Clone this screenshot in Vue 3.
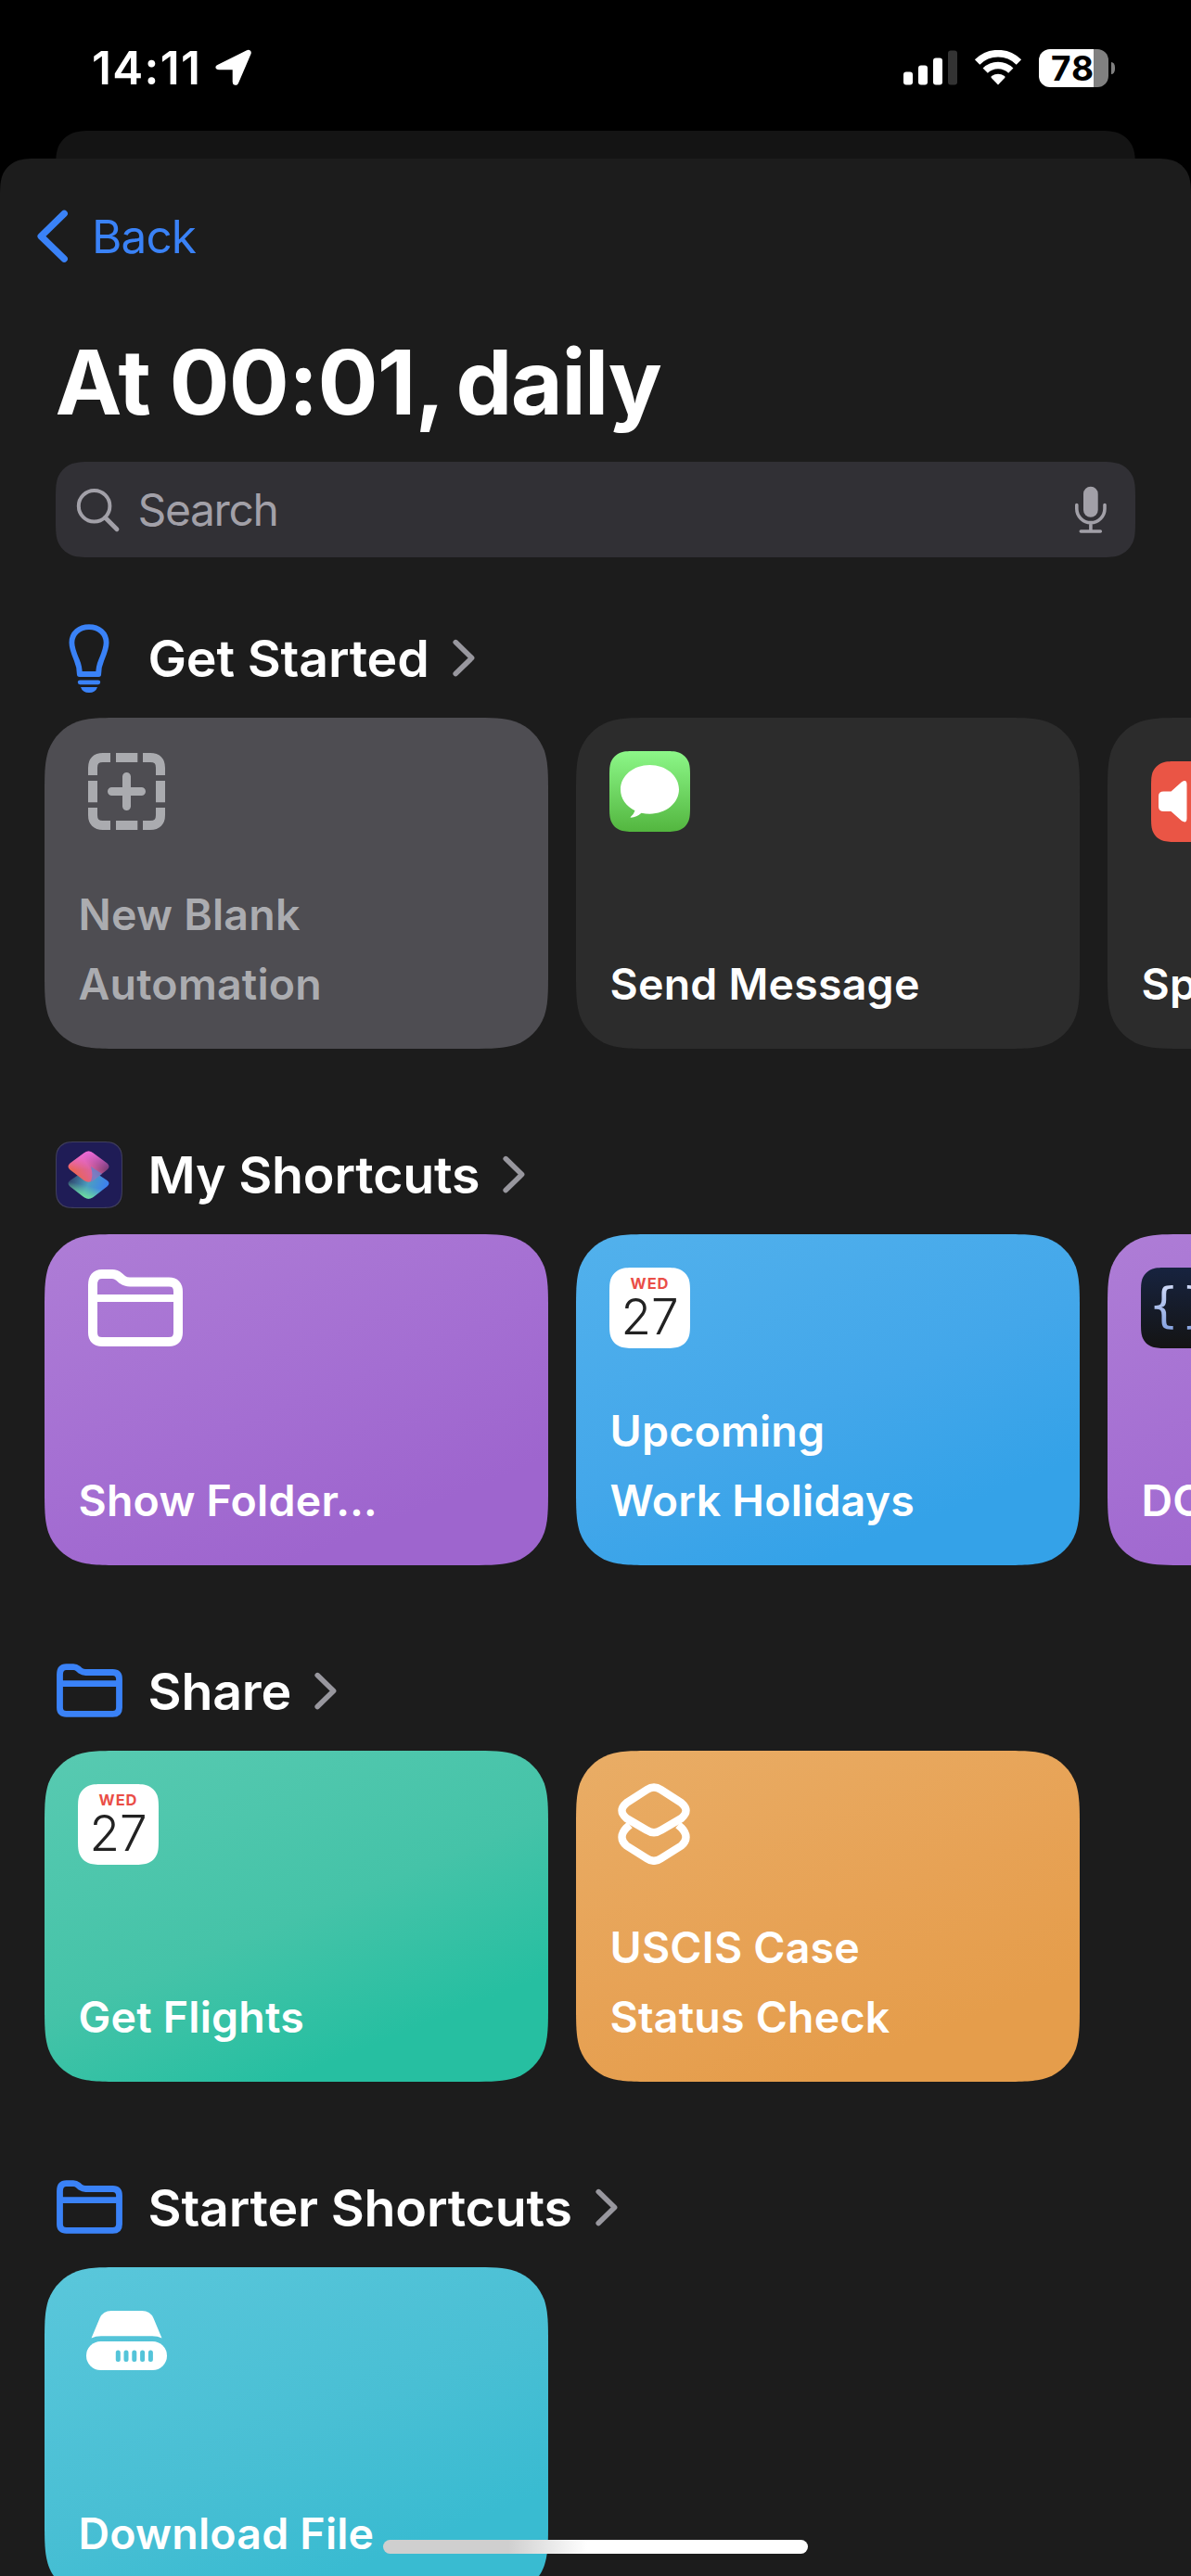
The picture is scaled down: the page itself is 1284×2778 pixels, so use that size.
<script setup>
// Continuous-corner rounded rectangle, returned as a CSS path().
function squircle(w, h, r, roundBottom = true) {
  const corner = [
    [1.52866498, 0, 1.08849296, 0, 0.86840694, 0, 0.63149379, 0.07491139],
    [0.37282383, 0.16905956, 0.16905956, 0.37282383, 0.07491139, 0.63149379],
    [0, 0.86840694, 0, 1.08849296, 0, 1.52866498],
  ]
  const flat = corner.flat().map((v) => v * r)
  const pts = []
  for (let i = 0; i < flat.length; i += 2) pts.push([flat[i], flat[i + 1]])
  const back = [...pts].reverse()
  const draw = (list, fn) => {
    const p = list.map(([x, y]) => fn(x, y).map((n) => n.toFixed(2)).join(' '))
    return `L${p[0]} C${p[1]} ${p[2]} ${p[3]} C${p[4]} ${p[5]} ${p[6]} C${p[7]} ${p[8]} ${p[9]}`
  }
  const top = `M${w / 2} 0 ${draw(pts, (x, y) => [w - x, y])}`
  const bottom = roundBottom
    ? `${draw(back, (x, y) => [w - x, h - y])} ${draw(pts, (x, y) => [x, h - y])}`
    : `L${w} ${h} L0 ${h}`
  return `path("${top} ${bottom} ${draw(back, (x, y) => [x, y])} Z")`
}

const cardClip = squircle(543, 357, 56)
const iconClip = squircle(87, 87, 19.5)
const appClip = squircle(72, 72, 16)
const appInnerClip = squircle(70, 70, 15.5)
const searchClip = squircle(1164, 103, 28)
const sheetClip = squircle(1284, 2607, 30, false)
const backClip = squircle(1164, 70, 30, false)

const sections = [
  {
    title: 'Get Started',
    icon: 'bulb',
    cards: [
      { icon: 'blank', tone: 'gray', lines: ['New Blank', 'Automation'] },
      { icon: 'message', tone: 'dark', lines: ['Send Message'] },
      { icon: 'speaker', tone: 'dark', lines: ['Sp'] },
    ],
  },
  {
    title: 'My Shortcuts',
    icon: 'app',
    cards: [
      { icon: 'folder', tone: 'purple', lines: ['Show Folder…'] },
      { icon: 'calendar', tone: 'blue', lines: ['Upcoming', 'Work Holidays'] },
      { icon: 'code', tone: 'purple', lines: ['DO'] },
    ],
  },
  {
    title: 'Share',
    icon: 'folder',
    cards: [
      { icon: 'calendar', tone: 'green', lines: ['Get Flights'] },
      { icon: 'layers', tone: 'orange', lines: ['USCIS Case', 'Status Check'] },
    ],
  },
  {
    title: 'Starter Shortcuts',
    icon: 'folder',
    cards: [{ icon: 'drive', tone: 'cyan', lines: ['Download File'] }],
  },
]
</script>

<template>
  <div class="screen">
    <header class="status">
      <div class="status-left">
        <span class="time">14:11</span>
        <svg class="location" width="40" height="40" viewBox="0 0 40 40">
          <path d="M3 18.2 34.6 2.4 C36.4 1.5 38 2.9 37.3 4.8 L23.7 36.4 C22.8 38.2 20 37.8 20 35.6 L20 20.9 L4 20.9 C1.6 20.9 0.9 19.2 3 18.2Z" fill="#fff" stroke="#fff" stroke-width="2.6" stroke-linejoin="round" />
        </svg>
      </div>
      <div class="status-right">
        <svg width="58" height="38" viewBox="0 0 58 38">
          <rect x="0" y="23.5" width="10" height="14" rx="3" fill="#fff" />
          <rect x="16" y="16.5" width="10" height="21" rx="3" fill="#fff" />
          <rect x="32" y="8.5" width="10" height="29" rx="3" fill="#fff" />
          <rect x="48" y="0.5" width="10" height="37" rx="3" fill="#333" />
        </svg>
        <svg class="wifi" width="52" height="38" viewBox="0 0 52 38">
          <path d="M3.6 13 A31.5 31.5 0 0 1 48.4 13" fill="none" stroke="#fff" stroke-width="7.6" />
          <path d="M12.2 22.2 A19.5 19.5 0 0 1 39.8 22.2" fill="none" stroke="#fff" stroke-width="7.4" />
          <path d="M26 37.4 L18.8 30.1 Q17.8 29 19 28.1 Q26 23.3 33 28.1 Q34.2 29 33.2 30.1 Z" fill="#fff" />
        </svg>
        <div class="battery"><span>78</span></div>
        <div class="nub"></div>
      </div>
    </header>

    <div class="back-sheet"></div>

    <main class="sheet">
      <nav class="nav">
        <svg width="34" height="58" viewBox="0 0 34 58">
          <path d="M29.2 4.4 4.2 28.8 29.2 53.2" fill="none" stroke="#3a82f7" stroke-width="7.4" stroke-linecap="round" stroke-linejoin="round" />
        </svg>
        <span>Back</span>
      </nav>

      <h1>At <span class="clock">00:01,</span> daily</h1>

      <div class="search">
        <svg width="48" height="50" viewBox="0 0 48 50">
          <circle cx="19.6" cy="20.7" r="16.8" fill="none" stroke="#a2a0a8" stroke-width="4" />
          <path d="M31.5 33.2 44 45.7" stroke="#a2a0a8" stroke-width="4.8" stroke-linecap="round" />
        </svg>
        <span>Search</span>
        <svg class="mic" width="34" height="52" viewBox="0 0 34 52">
          <rect x="9" y="0.8" width="15.7" height="33" rx="7.85" fill="#a2a0a8" />
          <path d="M1.8 20.5 V24.5 A15.1 15.1 0 0 0 32 24.5 V20.5 M16.9 40 V48" fill="none" stroke="#a2a0a8" stroke-width="3.6" stroke-linecap="round" />
          <path d="M6.3 49 H27.3" stroke="#a2a0a8" stroke-width="3.6" stroke-linecap="round" />
        </svg>
      </div>

      <section v-for="section in sections" :key="section.title">
        <div class="heading">
          <div class="heading-icon">
            <svg v-if="section.icon === 'bulb'" width="44" height="74" viewBox="0 0 44 74">
              <path d="M11.8 54 C11.8 54 12 46.5 8.6 38.5 C5.6 31.5 3.4 26.5 3.4 20 C3.4 9.8 11.6 3.1 22 3.1 S40.6 9.8 40.6 20 C40.6 26.5 38.4 31.5 35.4 38.5 C32 46.5 32.2 54 32.2 54 Z" fill="none" stroke="#3a82f7" stroke-width="5.8" stroke-linejoin="round" />
              <rect x="9.8" y="60.4" width="24.4" height="4.8" rx="2.4" fill="#3a82f7" />
              <path d="M13 68 H31 Q29 74 22 74 T13 68Z" fill="#3a82f7" />
            </svg>
            <div v-else-if="section.icon === 'app'" class="app">
              <div class="app-inner">
                <svg width="70" height="70" viewBox="0 0 70 70">
                  <defs>
                    <linearGradient id="topA" x1="0" y1="0.75" x2="1" y2="0.25">
                      <stop offset="0" stop-color="#f0653f" />
                      <stop offset="0.5" stop-color="#dc629c" />
                      <stop offset="1" stop-color="#4b2a66" />
                    </linearGradient>
                    <linearGradient id="topB" x1="0.5" y1="0" x2="0.5" y2="1">
                      <stop offset="0" stop-color="#ee6bdc" />
                      <stop offset="0.6" stop-color="#ee6bdc" stop-opacity="0" />
                    </linearGradient>
                    <linearGradient id="lowA" x1="0" y1="0.3" x2="1" y2="0.6">
                      <stop offset="0" stop-color="#2c3c66" />
                      <stop offset="0.5" stop-color="#4c9fc0" />
                      <stop offset="1" stop-color="#3a7cf6" />
                    </linearGradient>
                    <linearGradient id="lowB" x1="0.6" y1="0.4" x2="0.4" y2="1">
                      <stop offset="0.3" stop-color="#6fe39a" stop-opacity="0" />
                      <stop offset="1" stop-color="#72e59a" />
                    </linearGradient>
                  </defs>
                  <path d="M34.5 29 Q37 29 39.5 31 L54.5 41 Q58.5 44 54.5 47.4 L39.5 59 Q34.5 62.6 29.5 59 L14.5 47.4 Q10.5 44 14.5 41 L29.5 31 Q32 29 34.5 29Z" fill="url(#lowA)" />
                  <path d="M34.5 29 Q37 29 39.5 31 L54.5 41 Q58.5 44 54.5 47.4 L39.5 59 Q34.5 62.6 29.5 59 L14.5 47.4 Q10.5 44 14.5 41 L29.5 31 Q32 29 34.5 29Z" fill="url(#lowB)" />
                  <path d="M39.5 11.4 L54.5 22.6 Q58.5 26 54.5 29.4 L39.5 41 Q34.5 44.6 29.5 41 L14.5 29.4 Q10.5 26 14.5 22.6 L29.5 11.4 Q34.5 7.6 39.5 11.4Z" fill="url(#topA)" />
                  <path d="M39.5 11.4 L54.5 22.6 Q58.5 26 54.5 29.4 L39.5 41 Q34.5 44.6 29.5 41 L14.5 29.4 Q10.5 26 14.5 22.6 L29.5 11.4 Q34.5 7.6 39.5 11.4Z" fill="url(#topB)" />
                  <path d="M37 26 L49 34 L39.5 41 L36.5 42.6 Q40 36 37 26Z" fill="#5d86cf" opacity="0.75" />
                </svg>
              </div>
            </div>
            <svg v-else class="heading-folder" width="71" height="58" viewBox="0 0 102 83">
              <path d="M5 17 Q5 5 15 5 H26 Q30 5 33.5 8 L37 11 Q40.5 13.5 45 13.5 H87 Q97 13.5 97 24 V68 Q97 78 87 78 H15 Q5 78 5 68 Z M5 31 H97" fill="none" stroke="#3a82f7" stroke-width="9.8" />
            </svg>
          </div>
          <h2>{{ section.title }}</h2>
          <svg class="chevron" width="24" height="42" viewBox="0 0 24 42">
            <path d="M3.2 3.6 20.6 20.6 3.2 37.6" fill="none" stroke="#98979e" stroke-width="5.6" stroke-linecap="round" stroke-linejoin="round" />
          </svg>
        </div>

        <div class="cards">
          <article v-for="card in section.cards" :key="card.lines[0]" class="card" :class="card.tone">
            <svg v-if="card.icon === 'blank'" class="glyph" width="83" height="83" viewBox="0 0 83 83">
              <path d="M24 5 H16 Q5 5 5 16 V24 M59 5 H67 Q78 5 78 16 V24 M78 59 V67 Q78 78 67 78 H59 M24 78 H16 Q5 78 5 67 V59 M30 5 H53.3 M30 78 H53.3 M5 30 V53.3 M78 30 V53.3" fill="none" stroke="#aaabaf" stroke-width="10" />
              <path d="M25.5 41.5 H57.5 M41.5 25.5 V57.5" stroke="#aaabaf" stroke-width="9" stroke-linecap="round" />
            </svg>
            <svg v-else-if="card.icon === 'folder'" class="glyph" width="102" height="83" viewBox="0 0 102 83">
              <path d="M5 17 Q5 5 15 5 H26 Q30 5 33.5 8 L37 11 Q40.5 13.5 45 13.5 H87 Q97 13.5 97 24 V68 Q97 78 87 78 H15 Q5 78 5 68 Z" fill="none" stroke="#fff" stroke-width="10" />
              <path d="M5 31 H97" stroke="#fff" stroke-width="8" />
            </svg>
            <svg v-else-if="card.icon === 'layers'" class="glyph layers" width="78" height="88" viewBox="0 0 78 88">
              <path d="M13 45 L9.5 48 Q-0.5 58.5 9.5 67.5 L31 81 Q39 86.5 47 81 L68.5 67.5 Q78.5 58.5 68.5 48 L65 45" fill="none" stroke="#fff" stroke-width="8.4" />
              <path d="M31.5 7 Q39 2 46.5 7 L68.5 21.2 Q78.5 29.6 68.5 38 L46.5 50.8 Q39 55.8 31.5 50.8 L9.5 38 Q-0.5 29.6 9.5 21.2 Z" fill="none" stroke="#fff" stroke-width="8.4" />
            </svg>
            <svg v-else-if="card.icon === 'drive'" class="glyph drive" width="87" height="64" viewBox="0 0 87 64">
              <path d="M5.5 29.6 L14.5 8 Q18 0 27 0 H60 Q69 0 72.5 8 L81.5 29.6 Q77 27.2 71 27.2 H16 Q10 27.2 5.5 29.6Z" fill="#fff" />
              <rect y="33" width="87" height="31" rx="15.5" fill="#fff" />
              <path d="M34.3 45 V52.6 M43 45 V52.6 M51.8 45 V52.6 M60.6 45 V52.6 M69.4 45 V52.6" stroke="#54c4d9" stroke-width="5" stroke-linecap="round" />
            </svg>
            <div v-else-if="card.icon === 'calendar'" class="tile calendar">
              <span class="weekday">WED</span>
              <span class="day">27</span>
            </div>
            <div v-else-if="card.icon === 'message'" class="tile message">
              <svg width="87" height="87" viewBox="0 0 87 87">
                <path d="M43.5 15 C61 15 75 26.5 75 41.3 C75 56 61 67.7 43.5 67.7 Q39 67.7 34.5 66.8 Q29.5 71.3 23 71.8 Q22.2 71.5 23 70.8 Q26.5 67.5 27.5 64.2 C18 59.8 12 51.3 12 41.3 C12 26.5 26 15 43.5 15Z" fill="#fff" />
              </svg>
            </div>
            <div v-else-if="card.icon === 'speaker'" class="tile speaker">
              <svg width="87" height="87" viewBox="0 0 87 87">
                <path d="M13.5 32.5 H21.5 L33 22.2 Q38.5 18.8 38.5 25 V61.5 Q38.5 67.5 33 64.3 L21.5 54 H13.5 Q8 54 8 49 V37.5 Q8 32.5 13.5 32.5Z" fill="#fff" />
              </svg>
            </div>
            <div v-else class="tile code"><span>{}</span></div>
            <p><span v-for="line in card.lines" :key="line">{{ line }}</span></p>
          </article>
        </div>
      </section>
    </main>

    <div class="home-indicator"></div>
  </div>
</template>

<style>
html,
body {
  background: #000;
  overflow: hidden;
}
</style>

<style scoped>
.screen {
  position: relative;
  width: 1284px;
  height: 2778px;
  overflow: hidden;
  background: #000;
  color: #fff;
  font-family: Inter, "Liberation Sans", sans-serif;
}

.status {
  display: flex;
  justify-content: space-between;
  height: 141px;
  padding: 0 82px 0 99px;
  box-sizing: border-box;
}
.status-left,
.status-right {
  display: flex;
  align-items: center;
  height: 60px;
  margin-top: 43px;
}
.time {
  font-size: 49.5px;
  line-height: 60px;
  font-weight: 600;
  letter-spacing: 1.35px;
}
.location {
  margin-left: 15px;
}
.wifi {
  margin-left: 18.5px;
}
.battery {
  width: 75px;
  height: 41px;
  margin-left: 18px;
  border-radius: 12px;
  background: linear-gradient(90deg, #fff 59px, #808080 59px);
  color: #000;
  font-size: 37px;
  line-height: 41px;
  font-weight: 700;
  letter-spacing: 1px;
}
.battery span {
  display: block;
  padding-left: 13px;
}
.nub {
  width: 4px;
  height: 13px;
  margin-left: 3px;
  border-radius: 0 5px 5px 0 / 0 6.5px 6.5px 0;
  background: #808080;
}

.back-sheet {
  height: 30px;
  margin: 0 60px;
  background: #141414;
  clip-path: v-bind(backClip);
}

.sheet {
  height: 2607px;
  box-sizing: border-box;
  padding-top: 54px;
  overflow: hidden;
  background: #1c1c1c;
  clip-path: v-bind(sheetClip);
}

.nav {
  display: flex;
  align-items: center;
  height: 60px;
  padding-left: 40px;
  color: #3a82f7;
  font-size: 49.5px;
  line-height: 60px;
  letter-spacing: -0.9px;
}
.nav span {
  margin-left: 25px;
}

h1 {
  margin: 71px 0 0 59.5px;
  font-size: 96.5px;
  line-height: 112px;
  font-weight: 700;
  letter-spacing: -1.5px;
  word-spacing: -6.7px;
}
.clock {
  margin: 0 -2px 0 6.5px;
  letter-spacing: -0.8px;
}

.search {
  display: flex;
  align-items: center;
  width: 1164px;
  height: 103px;
  margin: 30px 60px 0;
  padding: 0 31px 0 22px;
  box-sizing: border-box;
  background: #313035;
  color: #a2a0a8;
  font-size: 48px;
  letter-spacing: -1.4px;
  clip-path: v-bind(searchClip);
}
.search span {
  flex: 1;
  margin-left: 18.5px;
}

section {
  margin-top: 100px;
}
.search + section {
  margin-top: 73px;
}

.heading {
  display: flex;
  align-items: center;
  height: 72px;
  padding-left: 60px;
}
.heading-icon {
  display: flex;
  justify-content: center;
  align-items: center;
  width: 72px;
  height: 72px;
}
.heading-icon svg {
  flex: none;
}
.heading-folder {
  margin-bottom: 2px;
}
.app {
  display: flex;
  justify-content: center;
  align-items: center;
  width: 72px;
  height: 72px;
  background: #403f5c;
  clip-path: v-bind(appClip);
}
.app-inner {
  width: 70px;
  height: 70px;
  background: #1f1c56;
  clip-path: v-bind(appInnerClip);
}
.app-inner svg {
  display: block;
}
h2 {
  margin: 0 0 0 27.5px;
  font-size: 55.5px;
  line-height: 72px;
  font-weight: 600;
  letter-spacing: -0.2px;
}
.chevron {
  margin-left: 25px;
}

.cards {
  display: flex;
  gap: 30px;
  padding-left: 48px;
  margin-top: 28px;
}
.card {
  display: flex;
  flex: none;
  flex-direction: column;
  justify-content: space-between;
  width: 543px;
  height: 357px;
  box-sizing: border-box;
  padding: 36px 36px 32px;
  clip-path: v-bind(cardClip);
}
.card p {
  margin: 0 0 0 0.5px;
  font-size: 46.5px;
  line-height: 75px;
  font-weight: 560;
  letter-spacing: 0.2px;
}
.card p span {
  display: block;
}
.gray {
  background: #4e4d52;
  color: #abacb0;
}
.dark {
  background: #2c2c2c;
}
.purple {
  background: linear-gradient(158deg, #ae7dd6, #a46ed2 50%, #9e65ce 80%, #9e65ce);
}
.blue {
  background: linear-gradient(158deg, #52b1ec, #43a7ea 50%, #34a2e8 80%, #34a2e8);
}
.green {
  background: linear-gradient(158deg, #58cab1, #45c3a8 50%, #26bfa1 80%, #26bfa1);
}
.orange {
  background: linear-gradient(158deg, #e9ad66, #e7a255 50%, #e59d4b 80%, #e59d4b);
}
.cyan {
  background: linear-gradient(158deg, #5ac7db, #49bfd4 50%, #39bbd1 80%, #39bbd1);
}

.glyph {
  display: block;
  margin: 2px 0 0 11px;
}
.layers {
  margin: -1px 0 0 9px;
}
.drive {
  margin: 11px 0 0 9px;
}
.tile {
  width: 87px;
  height: 87px;
  flex: none;
  clip-path: v-bind(iconClip);
}
.tile svg {
  display: block;
}
.calendar {
  display: flex;
  flex-direction: column;
  align-items: center;
  background: #fff;
}
.weekday {
  margin-top: 7px;
  color: #ea4e47;
  font-size: 16.5px;
  line-height: 20px;
  font-weight: 700;
  letter-spacing: 0.9px;
}
.day {
  color: #222;
  font-size: 53px;
  line-height: 52px;
  font-weight: 300;
}
.message {
  background: linear-gradient(#8cf788, #53b63f);
}
.speaker {
  margin: 11px 0 0 11px;
  background: #ea5545;
}
.code {
  background: linear-gradient(#17233f, #141414);
}
.code span {
  display: block;
  padding-left: 9px;
  font-family: "DejaVu Sans Mono", monospace;
  font-size: 52px;
  line-height: 80px;
  letter-spacing: 4px;
  white-space: nowrap;
  color: transparent;
  background: linear-gradient(#d3dcf8 20%, #8aa6e2 80%);
  background-clip: text;
}

.home-indicator {
  position: absolute;
  left: 413px;
  bottom: 24px;
  width: 458px;
  height: 15px;
  border-radius: 8px;
  background: linear-gradient(90deg, #cfcfcf 0 135px, #fff 220px);
}
</style>
